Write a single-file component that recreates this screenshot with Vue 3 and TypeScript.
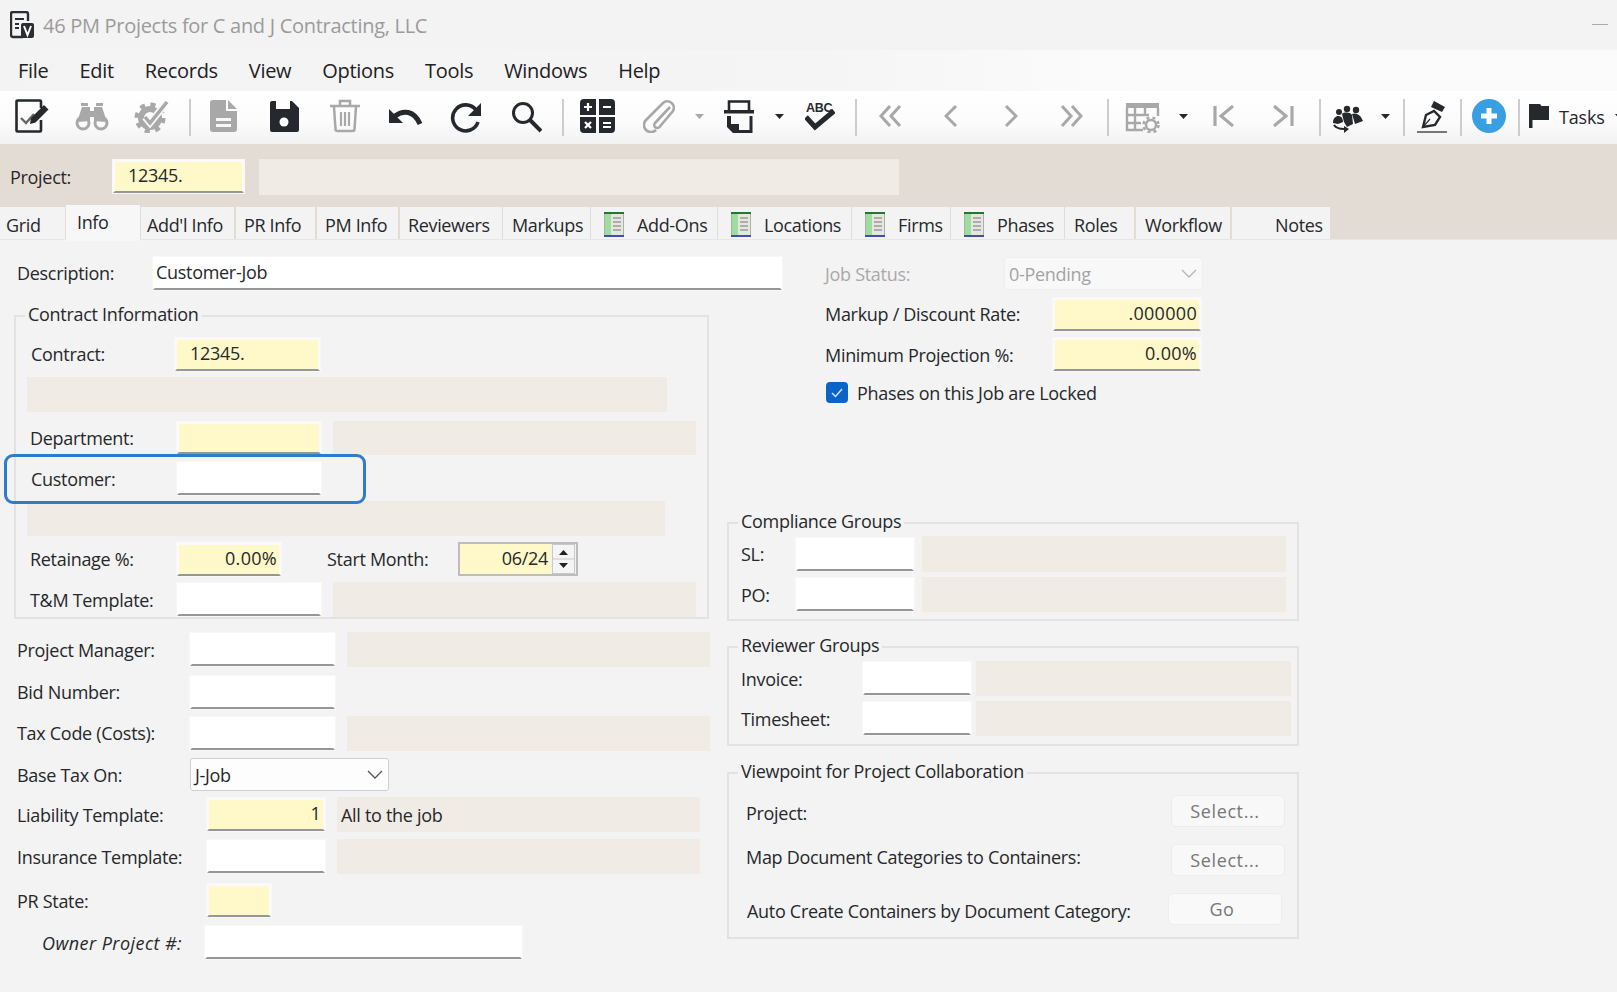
<script setup lang="ts">
type Item = { k: string; x: number; w: number; h?: number; text?: string; c?: string; r?: boolean; dis?: boolean; it?: boolean; ml?: number; dy?: number };
type Row = { y: number; h: number; items: Item[]; mt?: number };
type Sec = { y: number; end?: number; x?: number; w?: number; legend?: string; lx?: number; rows: Row[]; mt?: number };

const L = (x: number, w: number, text: string, dis = false, dy = 0): Item => ({ k: 'label', x, w, text, dis, dy });
const F = (x: number, w: number, c: string, text = '', r = false, h = 33): Item => ({ k: 'in', x, w, c, text, r, h });
const G = (x: number, w: number, text = '', h = 35): Item => ({ k: 'gray', x, w, text, h });
const S = (x: number, w: number, text: string, dis = false): Item => ({ k: 'sel', x, w, text, dis, h: 33 });
const B = (x: number, w: number, text: string, dis = true): Item => ({ k: 'btn', x, w, text, dis, h: 32 });

function lay(cols: Sec[], ox: number): Sec[] {
  let py = 240;
  return cols.map((s) => {
    const framed = !!s.legend;
    const sx = framed ? (s.x as number) + 2 : ox;
    let ry = framed ? s.y + 2 : py;
    const out: Sec = { ...s, mt: framed ? s.y - py : 0 };
    out.rows = s.rows.map((r) => {
      let px = sx;
      const items = r.items.map((i) => {
        const it = { ...i, ml: i.x - px };
        px = i.x + i.w;
        return it;
      });
      const row = { ...r, items, mt: r.y - ry };
      ry = r.y + r.h;
      return row;
    });
    py = framed ? (s.end as number) : ry;
    return out;
  });
}

const leftCol = lay([
  { y: 240, rows: [{ y: 257, h: 33, items: [L(17, 120, 'Description:', false, -1), F(153, 629, 'w desc', 'Customer-Job')] }] },
  {
    y: 315, end: 619, x: 14, w: 695, legend: 'Contract Information', lx: 9, rows: [
      { y: 338, h: 33, items: [L(31, 130, 'Contract:', false, -1), F(175, 145, 'y', '12345.')] },
      { y: 377, h: 35, items: [G(27, 640)] },
      { y: 421, h: 34, items: [L(30, 130, 'Department:'), F(177, 144, 'y', '', false, 32), G(333, 363, '', 34)] },
      { y: 462, h: 33, items: [L(31, 130, 'Customer:'), F(177, 144, 'w')] },
      { y: 501, h: 35, items: [G(27, 638)] },
      { y: 542, h: 34, items: [L(30, 130, 'Retainage %:'), F(177, 104, 'y', '0.00%', true), L(327, 125, 'Start Month:'), { k: 'spin', x: 458, w: 120, h: 34, text: '06/24' }] },
      { y: 582, h: 35, items: [L(30, 140, 'T&M Template:'), F(177, 144, 'w'), G(333, 363)] },
    ],
  },
  {
    y: 619, rows: [
      { y: 632, h: 35, items: [L(17, 160, 'Project Manager:'), F(190, 145, 'w'), G(347, 363)] },
      { y: 676, h: 33, items: [L(17, 160, 'Bid Number:', false, -1), F(190, 145, 'w')] },
      { y: 716, h: 35, items: [L(17, 160, 'Tax Code (Costs):', false, -1), F(190, 145, 'w'), G(347, 363)] },
      { y: 758, h: 33, items: [L(17, 160, 'Base Tax On:'), S(190, 199, 'J-Job')] },
      { y: 797, h: 35, items: [L(17, 180, 'Liability Template:'), F(207, 118, 'y', '1', true), G(337, 363, 'All to the job')] },
      { y: 839, h: 35, items: [L(17, 180, 'Insurance Template:'), F(207, 118, 'w'), G(337, 363)] },
      { y: 884, h: 33, items: [L(17, 180, 'PR State:'), F(207, 64, 'y')] },
      { y: 926, h: 33, items: [{ k: 'label', x: 17, w: 165, text: 'Owner Project #:', it: true }, F(205, 317, 'w')] },
    ],
  },
], 0);

const rightCol = lay([
  {
    y: 240, rows: [
      { y: 257, h: 33, items: [L(825, 170, 'Job Status:', true), S(1004, 199, '0-Pending', true)] },
      { y: 298, h: 33, items: [L(825, 220, 'Markup / Discount Rate:', false, -1), F(1053, 148, 'y', '.000000', true)] },
      { y: 338, h: 33, items: [L(825, 220, 'Minimum Projection %:'), F(1053, 148, 'y', '0.00%', true)] },
      { y: 382, h: 21, items: [{ k: 'check', x: 826, w: 22, h: 21 }, L(857, 300, 'Phases on this Job are Locked')] },
    ],
  },
  {
    y: 522, end: 621, x: 727, w: 572, legend: 'Compliance Groups', lx: 9, rows: [
      { y: 536, h: 36, items: [L(741, 50, 'SL:'), F(796, 118, 'w'), G(922, 364, '', 36)] },
      { y: 577, h: 35, items: [L(741, 50, 'PO:'), F(796, 118, 'w'), G(922, 364)] },
    ],
  },
  {
    y: 646, end: 746, x: 727, w: 572, legend: 'Reviewer Groups', lx: 9, rows: [
      { y: 661, h: 35, items: [L(741, 110, 'Invoice:'), F(863, 108, 'w'), G(976, 315)] },
      { y: 701, h: 35, items: [L(741, 110, 'Timesheet:'), F(863, 108, 'w'), G(976, 315)] },
    ],
  },
  {
    y: 772, end: 939, x: 727, w: 572, legend: 'Viewpoint for Project Collaboration', lx: 9, rows: [
      { y: 795, h: 32, items: [L(746, 300, 'Project:', false, 2), B(1171, 114, 'Select...')] },
      { y: 844, h: 32, items: [L(746, 400, 'Map Document Categories to Containers:', false, -3), B(1171, 114, 'Select...')] },
      { y: 892, h: 33, items: [L(747, 400, 'Auto Create Containers by Document Category:', false, 2), B(1168, 114, 'Go', false)] },
    ],
  },
], 727);

const menus = ['File', 'Edit', 'Records', 'View', 'Options', 'Tools', 'Windows', 'Help'];

const tabsRaw = [
  { t: 'Grid', a: 0, b: 65, p: 6 }, { t: 'Info', a: 66, b: 140, p: 11, on: true }, { t: "Add'l Info", a: 141, b: 234, p: 6 },
  { t: 'PR Info', a: 236, b: 315, p: 8 }, { t: 'PM Info', a: 317, b: 398, p: 8 }, { t: 'Reviewers', a: 400, b: 502, p: 8 },
  { t: 'Markups', a: 503, b: 590, p: 9 }, { t: 'Add-Ons', a: 591, b: 717, p: 13, ic: true }, { t: 'Locations', a: 718, b: 851, p: 13, ic: true },
  { t: 'Firms', a: 852, b: 950, p: 13, ic: true }, { t: 'Phases', a: 951, b: 1064, p: 13, ic: true }, { t: 'Roles', a: 1065, b: 1134, p: 9 },
  { t: 'Workflow', a: 1136, b: 1230, p: 9 }, { t: 'Notes', a: 1232, b: 1330, p: 43 },
];
let tp = 0;
const tabs = tabsRaw.map((t) => { const ml = t.a - tp; tp = t.b; return { ...t, ml, w: t.b - t.a }; });

const D = '#25292d';
const A = '#a8a8a8';
const sl = (d: string, c: string, w = 3) => `<path d="${d}" fill="none" stroke="${c}" stroke-width="${w}"/>`;
const fp = (d: string, c: string) => `<path d="${d}" fill="${c}"/>`;
const caret = (c: string) => fp('M0 0h9L4.500 5z', c);

const toolsRaw: { x: number; w: number; h?: number; top?: number; b?: string; sep?: boolean }[] = [
  { x: 15, w: 34, b: sl('M26 9V2.500a1 1 0 0 0-1-1H2.500a1 1 0 0 0-1 1v29a1 1 0 0 0 1 1H25a1 1 0 0 0 1-1V21', D, 2.6) + sl('M6 19l5 5 8-9', '#666', 2.4) + fp('M15 25l1-6L29 6l4.500 4.500-13 13z', D) },
  { x: 75, w: 34, b: `<circle cx="8" cy="24" r="6" fill="none" stroke="${A}" stroke-width="3"/><circle cx="26" cy="24" r="6" fill="none" stroke="${A}" stroke-width="3"/>` + fp('M2 23L7 8h8v14zM32 23L27 8h-8v14z', A) + fp('M6 4h7v3H6zM21 4h7v3h-7zM15 12h4v6h-4z', A) },
  { x: 134, w: 36, b: `<circle cx="16" cy="19" r="9" fill="none" stroke="${A}" stroke-width="6"/><circle cx="16" cy="19" r="13" fill="none" stroke="${A}" stroke-width="5" stroke-dasharray="5 5.200"/>` + sl('M11 18l5 6L33 3', '#f8f8f8', 7) + sl('M11 18l5 6L33 3', A, 3.500) },
  { x: 189, w: 2, sep: true },
  { x: 210, w: 27, b: fp('M3 1h13v11h11v18a3 3 0 0 1-3 3H3a3 3 0 0 1-3-3V4a3 3 0 0 1 3-3zM18 1l9 9h-9z', A) + fp('M6 19h15v3H6zM6 25h15v3H6z', '#f8f8f8') },
  { x: 269, w: 30, b: fp('M3 2h20l7 7v22a2 2 0 0 1-2 2H3a2 2 0 0 1-2-2V4a2 2 0 0 1 2-2z', D) + fp('M7 2h14v8H7z', '#fff') + `<circle cx="15" cy="23" r="4.500" fill="#fff"/>` },
  { x: 330, w: 30, b: sl('M0 7h30M10 6V2h10v4', A, 2.5) + sl('M4 8l1.500 22a2 2 0 0 0 2 2h15a2 2 0 0 0 2-2L26 8', A, 2.5) + sl('M11 13v14M15 13v14M19 13v14', A, 2.2) },
  { x: 389, w: 34, b: fp('M0 24V10l14 14z', D) + sl('M6 17c8-6 19-6 25 8', D, 5) },
  { x: 450, w: 32, b: sl('M26 11A13 13 0 1 0 28 23', D, 3.6) + fp('M31 4v13H18z', D) },
  { x: 510, w: 32, b: `<circle cx="13" cy="14" r="9.500" fill="none" stroke="${D}" stroke-width="3"/>` + sl('M20 21l11 11', D, 4) },
  { x: 562, w: 2, sep: true },
  { x: 580, w: 35, b: fp('M4 0h12v16H0V4a4 4 0 0 1 4-4zM19 0h12a4 4 0 0 1 4 4v12H19zM0 18h16v16H4a4 4 0 0 1-4-4zM19 18h16v12a4 4 0 0 1-4 4H19z', D) + sl('M4 8h8M8 4v8M23 8h8M23 24h8M23 28h8', '#fff', 2.2) + sl('M5 23l6 6M11 23l-6 6', '#fff', 2.2) },
  { x: 643, w: 32, b: sl('M27 8L12 24a3 3 0 0 0 4.500 4L30 12a6.500 6.500 0 0 0-10-8L3 21a6.500 6.500 0 0 0 10 10', A, 2.6) },
  { x: 695, w: 9, h: 5, top: 15, b: caret(A) },
  { x: 724, w: 30, b: sl('M5 11V2.500h20V11', D, 2.6) + fp('M0 11h30v3.500H0z', D) + fp('M3 17h4v8h8v9H9l-6-6z', D) + sl('M27 17v15.500H14', D, 3) },
  { x: 775, w: 10, h: 5, top: 15, b: caret(D) },
  { x: 805, w: 30, b: `<text x="1" y="13" font-size="12.500" font-weight="700" font-family="Liberation Sans" fill="${D}">ABC</text>` + sl('M1 18l9 10L29 12', D, 5) },
  { x: 855, w: 2, sep: true },
  { x: 879, w: 23, b: sl('M11 7L2 17l9 10M21 7l-9 10 9 10', A) },
  { x: 944, w: 14, b: sl('M12 7L2 17l10 10', A) },
  { x: 1004, w: 14, b: sl('M2 7l10 10L2 27', A) },
  { x: 1060, w: 23, b: sl('M2 7l9 10-9 10M12 7l9 10-9 10', A) },
  { x: 1107, w: 2, sep: true },
  { x: 1125, w: 35, b: fp('M1 4h33v5H1z', A) + sl('M2 9v22h16M2 16h22M2 24h14M10 9v22M20 9v7M33 9v8', A, 2.4) + `<circle cx="26" cy="26" r="5" fill="none" stroke="${A}" stroke-width="2.500"/><circle cx="26" cy="26" r="7.500" fill="none" stroke="${A}" stroke-width="2.500" stroke-dasharray="3 3.100"/>` },
  { x: 1179, w: 10, h: 5, top: 15, b: caret(D) },
  { x: 1213, w: 21, b: sl('M2 7v20', A, 3.2) + sl('M20 7L8 17l12 10', A) },
  { x: 1273, w: 21, b: sl('M1 7l12 10L1 27', A) + sl('M19 7v20', A, 3.2) },
  { x: 1319, w: 2, sep: true },
  { x: 1332, w: 31, b: `<circle cx="7" cy="13" r="3" fill="${D}"/><circle cx="15" cy="10" r="3.200" fill="${D}"/><circle cx="24" cy="11" r="3.200" fill="${D}"/>` + fp('M1 24c0-5 3-7 5-7 3 0 5 2 5 6l-5 2zM10 15c2-2 8-2 10 1l1 9-6 3-3-5zM20 15c4-2 9 1 11 7l-8 3z', D) + sl('M2 26c2 3 6 4 10 4', D, 2.2) + fp('M12 27l5 3-5 4z', D) },
  { x: 1381, w: 10, h: 5, top: 15, b: caret(D) },
  { x: 1403, w: 2, sep: true },
  { x: 1417, w: 30, b: sl('M6 28l3-12 8-4 6 6-5 8z', D, 2.400) + sl('M6 28l7-8', D, 1.2) + fp('M14 8l3-6 11 6-3 5z', D) + fp('M0 32h30v2H0z', '#777') },
  { x: 1460, w: 2, sep: true },
  { x: 1472, w: 34, b: `<circle cx="17" cy="17" r="17" fill="#38a0e2"/>` + fp('M14.500 9h5v5.500H25v5h-5.500V25h-5v-5.500H9v-5h5.500z', '#fff') },
  { x: 1518, w: 2, sep: true },
  { x: 1529, w: 20, b: fp('M0 5h3.500v24H0zM3.500 5H11l1.500 2H20v14H3.500z', D) },
];
let px0 = 0;
const tools = toolsRaw.map((t) => { const ml = t.x - px0; px0 = t.x + t.w; return { ...t, ml }; });
</script>

<template>
  <div class="page">
    <div class="title">
      <svg class="logo" width="24" height="28" viewBox="0 0 24 28">
        <path d="M13 26H3a2 2 0 0 1-2-2V3a2 2 0 0 1 2-2h13a2 2 0 0 1 2 2v7" fill="none" stroke="#2a2e32" stroke-width="2.400" />
        <path d="M5 8h9M5 13h4M5 17h4" fill="none" stroke="#2a2e32" stroke-width="2" />
        <rect x="11" y="12" width="13" height="15" rx="2" fill="#2a2e32" />
        <path d="M14 15l3.500 9 3.500-9" fill="none" stroke="#fff" stroke-width="2" />
      </svg>
      <span class="title-text">46 PM Projects for C and J Contracting, LLC</span>
      <span class="min"></span>
    </div>

    <div class="menu">
      <span v-for="m in menus" :key="m" class="menu-item">{{ m }}</span>
    </div>

    <div class="toolbar">
      <template v-for="(t, i) in tools" :key="i">
        <span v-if="t.sep" class="sep" :style="{ marginLeft: t.ml + 'px' }"></span>
        <svg
          v-else
          class="tool"
          :width="t.w"
          :height="t.h || 34"
          :viewBox="`0 0 ${t.w} ${t.h || 34}`"
          :style="{ marginLeft: t.ml + 'px', marginTop: (t.top || 0) + 'px' }"
          v-html="t.b"
        ></svg>
      </template>
      <span class="tasks">Tasks</span>
      <svg class="tasks-caret" width="9" height="5" viewBox="0 0 9 5"><path d="M0 0h9L4.500 5z" fill="#25292d" /></svg>
    </div>

    <div class="band">
      <div class="project">
        <span class="project-label">Project:</span>
        <div class="field y project-field"><span>12345.</span></div>
        <div class="gray project-gray"></div>
      </div>
      <div class="tabs">
        <div
          v-for="t in tabs"
          :key="t.t"
          class="tab"
          :class="{ on: t.on }"
          :style="{ marginLeft: t.ml + 'px', width: t.w + 'px', paddingLeft: t.p + 'px' }"
        >
          <svg v-if="t.ic" class="tab-icon" width="20" height="25" viewBox="0 0 20 25">
            <rect x="0.500" y="1" width="19" height="23" fill="#e4e6df" stroke="#a9b3a5" />
            <rect x="0" y="0" width="20" height="2" fill="#1f7a2e" />
            <rect x="0" y="23" width="20" height="2" fill="#3d4fb0" />
            <rect x="1" y="2" width="6" height="21" fill="#9fdc9f" />
            <path d="M9 6h8M9 10h8M9 14h8M9 18h8" stroke="#9a9a9a" stroke-width="1.500" />
          </svg>
          <span>{{ t.t }}</span>
        </div>
      </div>
    </div>

    <div class="form">
      <div v-for="(col, ci) in [leftCol, rightCol]" :key="ci" class="col" :class="ci === 0 ? 'col-left' : 'col-right'">
        <div
          v-for="(s, si) in col"
          :key="si"
          :class="{ frame: s.legend }"
          :style="s.legend ? { marginTop: s.mt + 'px', marginLeft: (s.x! - (ci === 0 ? 0 : 727)) + 'px', width: s.w + 'px', height: (s.end! - s.y) + 'px' } : {}"
        >
          <span v-if="s.legend" class="legend" :style="{ left: s.lx + 'px' }">{{ s.legend }}</span>
          <div v-for="(r, ri) in s.rows" :key="ri" class="row" :style="{ marginTop: r.mt + 'px', height: r.h + 'px' }">
            <template v-for="(it, ii) in r.items" :key="ii">
              <div
                :style="{ marginLeft: it.ml + 'px', width: it.w + 'px', height: it.h ? it.h + 'px' : 'auto', transform: it.dy ? `translateY(${it.dy}px)` : undefined }"
                :class="[
                  it.k === 'label' ? 'label' : '',
                  it.k === 'in' ? 'field ' + it.c : '',
                  it.k === 'gray' ? 'gray' : '',
                  it.k === 'sel' ? 'select' : '',
                  it.k === 'btn' ? 'btn' : '',
                  it.k === 'spin' ? 'spin' : '',
                  it.k === 'check' ? 'check' : '',
                  it.dis ? 'dis' : '',
                  it.it ? 'ital' : '',
                  it.r ? 'right' : '',
                ]"
              >
                <template v-if="it.k === 'spin'">
                  <span class="spin-val">{{ it.text }}</span>
                  <span class="spin-btns">
                    <svg width="23" height="30" viewBox="0 0 23 30">
                      <rect x="0.500" y="0.500" width="22" height="29" fill="#f5f5f5" stroke="#c9c9c9" />
                      <path d="M0 15h23" stroke="#c9c9c9" />
                      <path d="M7 11l4.500-5 4.500 5zM7 19l4.500 5 4.500-5z" fill="#222" />
                    </svg>
                  </span>
                </template>
                <svg v-else-if="it.k === 'check'" width="22" height="21" viewBox="0 0 22 21">
                  <rect width="22" height="21" rx="4" fill="#0b63c5" />
                  <path d="M6 11l3.500 3.500L16 7" fill="none" stroke="#cfe3fa" stroke-width="1.500" />
                </svg>
                <template v-else-if="it.k === 'sel'">
                  <span>{{ it.text }}</span>
                  <svg class="chev" width="16" height="9" viewBox="0 0 16 9">
                    <path d="M1 1l7 7 7-7" fill="none" :stroke="it.dis ? '#b5b5b5' : '#555'" stroke-width="1.300" />
                  </svg>
                </template>
                <span v-else>{{ it.text }}</span>
              </div>
            </template>
          </div>
        </div>
      </div>
    </div>

    <div class="highlight"></div>
  </div>
</template>

<style>
html, body { margin: 0; background: #f3f3f3; }
</style>

<style scoped>
.page {
  position: relative;
  width: 1617px;
  height: 992px;
  overflow: hidden;
  background: #f3f3f3;
  font-family: "Open Sans", "Noto Sans", sans-serif;
  font-size: 18px;
  letter-spacing: -0.3px;
  color: #26282b;
}
.title { height: 50px; display: flex; align-items: center; padding-left: 10px; box-sizing: border-box; }
.logo { flex: none; }
.title-text { margin-left: 9px; font-size: 20px; color: #9b9b9b; letter-spacing: -0.29px; }
.min { position: absolute; left: 1592px; top: 24px; width: 16px; height: 1px; background: #aaa; }
.menu {
  height: 41px;
  display: flex;
  align-items: center;
  padding-left: 18px;
  background: linear-gradient(90deg, #f3f3f3 0%, #f5f5f5 50%, #fbfbfb 70%);
  font-size: 20px;
  letter-spacing: -0.3px;
  color: #1e2023;
}
.menu-item { margin-right: 31px; }
.toolbar {
  height: 53px;
  box-sizing: border-box;
  padding-top: 8px;
  display: flex;
  align-items: flex-start;
  background: linear-gradient(180deg, #ffffff 0%, #fbfbfb 60%, #f2f2f2 100%);
}
.tool { flex: none; display: block; }
.sep { flex: none; width: 2px; height: 37px; background: #cdcdcd; }
.tasks { margin-left: 10px; margin-top: 6px; font-size: 18px; letter-spacing: -0.2px; flex: none; }
.tasks-caret { margin-left: 10px; margin-top: 15px; flex: none; }
.band { height: 95px; background: #e3dcd5; display: flex; flex-direction: column; }
.project { height: 63px; box-sizing: border-box; padding: 2px 0 0 10px; display: flex; align-items: center; }
.project-label { width: 103px; flex: none; }
.project-field { width: 131px; height: 33px; }
.project-gray { margin-left: 15px; width: 640px; height: 36px; }
.tabs { height: 32px; display: flex; }
.tab {
  flex: none;
  box-sizing: border-box;
  height: 32px;
  background: #f3f3f3;
  display: flex;
  align-items: center;
  padding-top: 3px;
  letter-spacing: -0.35px;
  white-space: nowrap;
}
.tab.on { height: 36px; margin-top: -2px; background: #f7f7f7; padding-top: 0; padding-bottom: 2px; position: relative; z-index: 1; }
.tab-icon { flex: none; margin-right: 13px; }
.form { display: flex; border-top: 1px solid #e6e6e6; height: 753px; box-sizing: border-box; }
.col { flex: none; }
.col-left { width: 727px; }
.frame { position: relative; box-sizing: border-box; border: 2px solid #e2e2e2; }
.legend {
  position: absolute;
  top: -15px;
  background: #f3f3f3;
  padding: 0 3px;
  height: 24px;
  line-height: 24px;
  white-space: nowrap;
}
.row { display: flex; align-items: center; }
.label { flex: none; white-space: nowrap; }
.label.dis { color: #a9a9a9; }
.label.ital { font-style: italic; text-align: right; letter-spacing: 0.45px; }
.field {
  flex: none;
  box-sizing: border-box;
  border: 2px solid #fafafa;
  border-bottom: 2px solid #969696;
  box-shadow: 0 0 0 1px #f8f8f8;
  background: #fff;
  display: flex;
  align-items: center;
  padding: 0 0 3px 13px;
  white-space: nowrap;
}
.field.y { background: #fff8c9; }
.field.w { background: #fff; border-color: #fff; border-bottom-color: #969696; }
.field.desc { padding-left: 1px; }
.field.right { justify-content: flex-end; padding-left: 0; padding-right: 2px; letter-spacing: 0.3px; }
.gray {
  flex: none;
  background: #f0ebe5;
  display: flex;
  align-items: center;
  padding-left: 4px;
  box-sizing: border-box;
}
.select {
  flex: none;
  box-sizing: border-box;
  background: #fdfdfd;
  border: 1.500px solid #cfcfcf;
  border-radius: 3px;
  display: flex;
  align-items: center;
  justify-content: space-between;
  padding: 0 5px 0 4px;
}
.select.dis { background: #f8f8f8; border-color: #eeeeee; color: #a3a3a3; }
.chev { flex: none; }
.btn {
  flex: none;
  box-sizing: border-box;
  background: #f8f8f8;
  border: 1.500px solid #ededed;
  border-radius: 5px;
  display: flex;
  align-items: center;
  justify-content: center;
  color: #777;
  letter-spacing: 0.6px;
  padding-right: 6px;
}
.btn:not(.dis) { background: #f9f9f9; }
.spin {
  flex: none;
  box-sizing: border-box;
  background: #fff8c9;
  border: 2px solid #bdbdbd;
  display: flex;
  align-items: center;
  justify-content: flex-end;
}
.spin-val { margin-right: 3px; margin-bottom: 3px; }
.spin-btns { flex: none; display: flex; background: #f3f3f3; padding: 0 1px; }
.check { flex: none; }
.check svg { display: block; }
.highlight {
  position: absolute;
  left: 4px;
  top: 454px;
  width: 362px;
  height: 50px;
  box-sizing: border-box;
  border: 3px solid #2f7dc8;
  border-radius: 9px;
}
</style>
